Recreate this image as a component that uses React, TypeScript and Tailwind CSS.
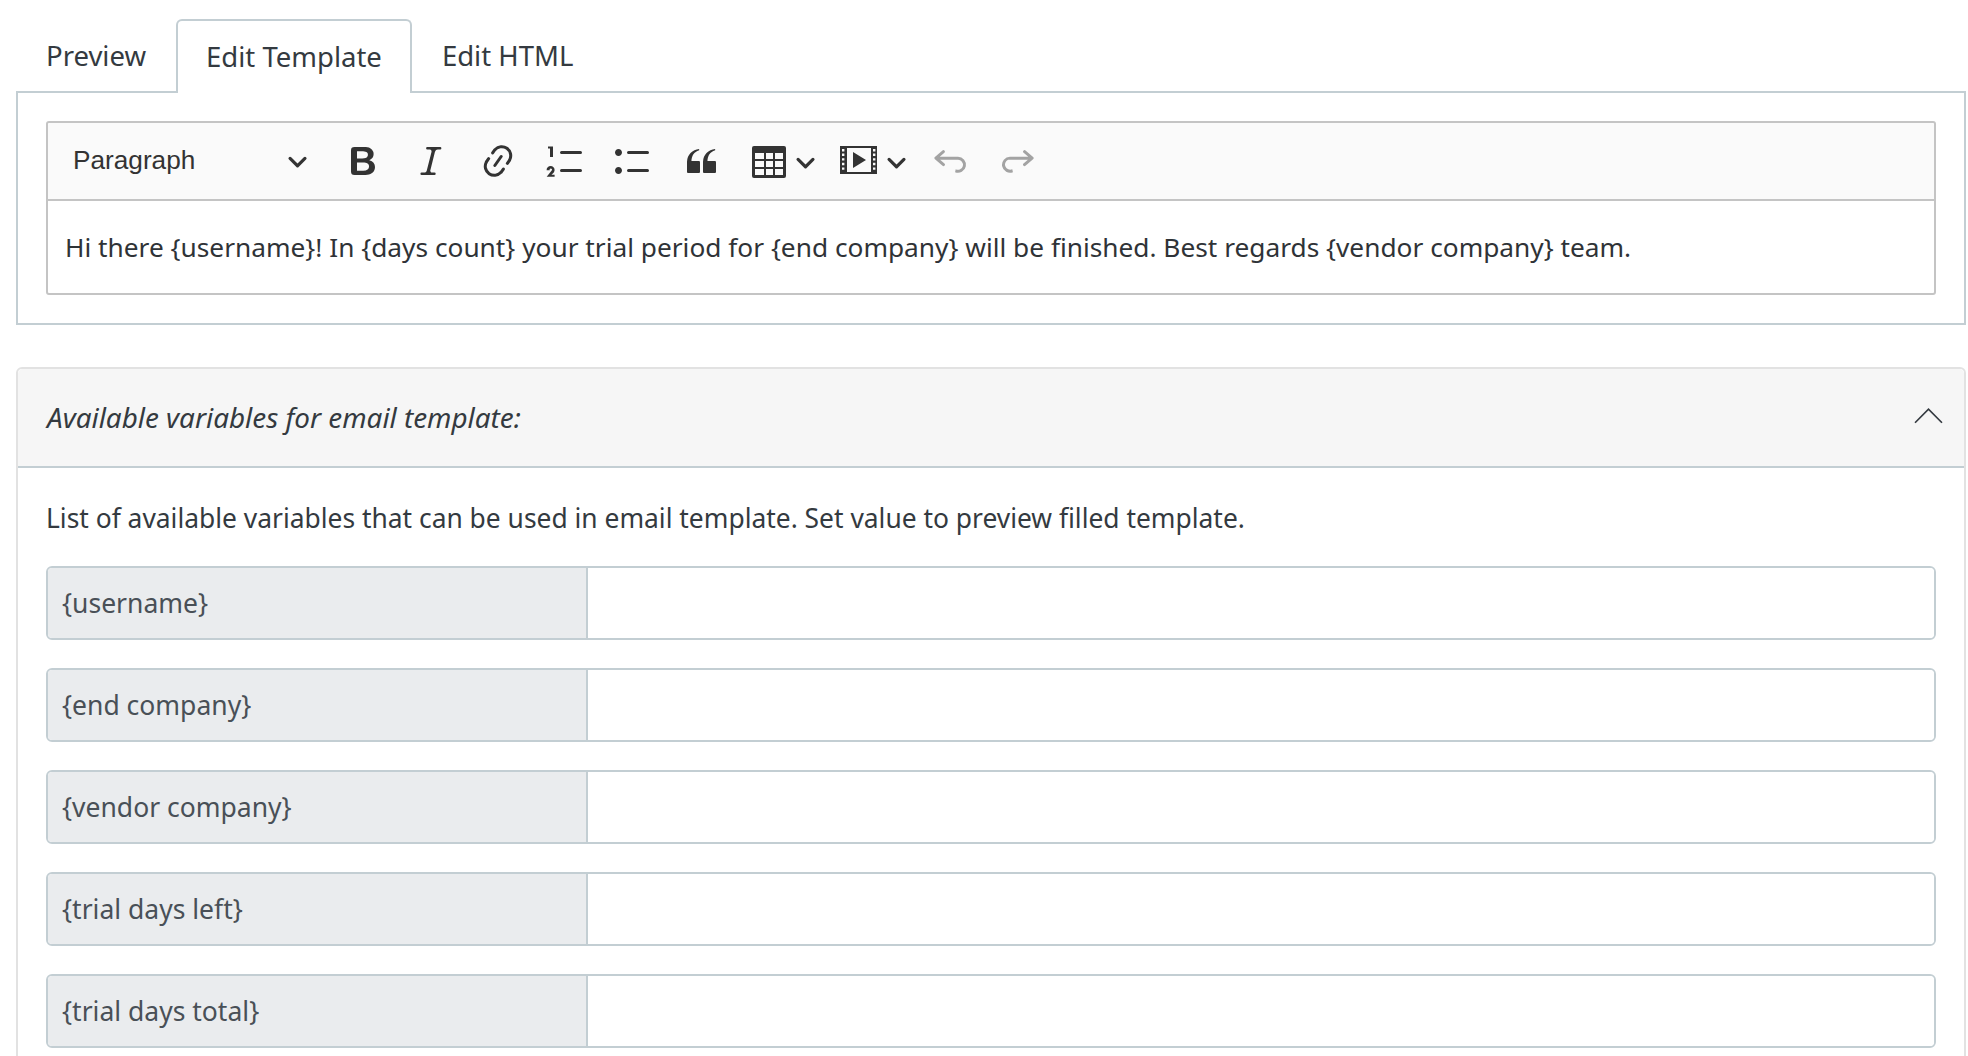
const FONT = "font-['Noto_Sans',sans-serif]";

function Icon({ d, className, evenOdd }: { d: string; className?: string; evenOdd?: boolean }) {
  return (
    <svg viewBox="0 0 20 20" className={`w-[40px] h-[40px] shrink-0 fill-current ${className ?? ""}`}>
      <path d={d} fillRule={evenOdd ? "evenodd" : undefined} />
    </svg>
  );
}

function Arrow({ className }: { className?: string }) {
  return (
    <svg viewBox="0 0 10 10" className={`w-[21px] h-[21px] shrink-0 fill-current ${className ?? ""}`}>
      <path d="M.941 4.523a.75.75 0 1 1 1.06-1.06l3.006 3.005 3.005-3.005a.75.75 0 1 1 1.06 1.06L5.537 8.059a.75.75 0 0 1-1.06 0L.941 4.523z" />
    </svg>
  );
}

const icons = {
  bold: "M10.187 17H5.773c-.637 0-1.092-.138-1.364-.415-.273-.277-.409-.718-.409-1.323V4.738c0-.617.14-1.062.419-1.332.279-.27.73-.406 1.354-.406h4.68c.69 0 1.288.041 1.793.124.506.083.96.242 1.36.478.341.197.644.447.906.75a3.262 3.262 0 0 1 .808 2.162c0 1.401-.722 2.426-2.167 3.075C15.05 10.175 16 11.315 16 13.01a3.756 3.756 0 0 1-2.296 3.504 6.1 6.1 0 0 1-1.517.377c-.571.073-1.238.11-2 .11zm-.217-6.217H7v4.087h3.069c1.977 0 2.965-.69 2.965-2.072 0-.707-.256-1.22-.768-1.537-.512-.319-1.277-.478-2.296-.478zM7 5.13v3.619h2.606c.729 0 1.292-.067 1.69-.2a1.6 1.6 0 0 0 .91-.765c.165-.267.247-.566.247-.897 0-.707-.26-1.176-.778-1.409-.519-.232-1.31-.348-2.375-.348H7z",
  italic: "m9.586 14.633.021.004c-.036.335.095.655.393.962.082.083.173.15.274.201h1.474a.6.6 0 1 1 0 1.2H5.304a.6.6 0 0 1 0-1.2h1.15c.474-.07.809-.182 1.005-.334.157-.122.291-.32.404-.597l2.416-9.55a1.053 1.053 0 0 0-.281-.823 1.12 1.12 0 0 0-.442-.296H8.15a.6.6 0 0 1 0-1.2h6.443a.6.6 0 1 1 0 1.2h-1.195c-.376.056-.65.155-.823.296-.215.175-.423.491-.623.95l-2.366 9.587z",
  link: "m11.077 15 .991-1.416a.75.75 0 1 1 1.229.86l-1.148 1.64a.748.748 0 0 1-.217.206 5.251 5.251 0 0 1-8.503-5.955.741.741 0 0 1 .12-.274l1.147-1.639a.75.75 0 1 1 1.228.86L4.933 10.7l.006.003a3.75 3.75 0 0 0 6.132 4.294l.006.004zm5.494-5.335a.748.748 0 0 1-.12.274l-1.147 1.639a.75.75 0 1 1-1.228-.86l.86-1.23a3.75 3.75 0 0 0-6.144-4.301l-.86 1.229a.75.75 0 0 1-1.229-.86l1.148-1.64a.748.748 0 0 1 .217-.206 5.251 5.251 0 0 1 8.503 5.955zm-4.563-2.532a.75.75 0 0 1 .184 1.045l-3.155 4.505a.75.75 0 1 1-1.229-.86l3.155-4.506a.75.75 0 0 1 1.045-.184z",
  numbered: "M7 5.75c0 .414.336.75.75.75h9.5a.75.75 0 1 0 0-1.5h-9.5a.75.75 0 0 0-.75.75zM3.5 3v5H2V3.7H1v-1h2.5V3zM.343 17.857l2.59-3.257H2.92a.6.6 0 1 0-1.04 0H.302a2 2 0 1 1 3.995 0h-.001c-.048.405-.16.734-.333.988-.175.254-.59.692-1.244 1.312H4.3v1h-4l.043-.043zM7 14.75a.75.75 0 0 1 .75-.75h9.5a.75.75 0 1 1 0 1.5h-9.5a.75.75 0 0 1-.75-.75z",
  bulleted: "M7 5.75c0 .414.336.75.75.75h9.5a.75.75 0 1 0 0-1.5h-9.5a.75.75 0 0 0-.75.75zm-6 0C1 4.784 1.777 4 2.75 4c.966 0 1.75.777 1.75 1.75 0 .966-.777 1.75-1.75 1.75C1.784 7.5 1 6.723 1 5.75zm6 9c0 .414.336.75.75.75h9.5a.75.75 0 1 0 0-1.5h-9.5a.75.75 0 0 0-.75.75zm-6 0c0-.966.777-1.75 1.75-1.75.966 0 1.75.777 1.75 1.75 0 .966-.777 1.75-1.75 1.75-.966 0-1.75-.777-1.75-1.75z",
  quote: "M3 10.423a6.5 6.5 0 0 1 6.056-6.408l.038.67C6.448 5.423 5.354 7.663 5.22 10H9c.552 0 .5.432.5.986v4.511c0 .554-.448.503-1 .503h-5c-.552 0-.5-.449-.5-1.003v-4.574zm8 0a6.5 6.5 0 0 1 6.056-6.408l.038.67c-2.646.739-3.74 2.979-3.873 5.315H17c.552 0 .5.432.5.986v4.511c0 .554-.448.503-1 .503h-5c-.552 0-.5-.449-.5-1.003v-4.574z",
  table: "M2.5 2.5h15a1 1 0 0 1 1 1v14a1 1 0 0 1-1 1h-15a1 1 0 0 1-1-1v-14a1 1 0 0 1 1-1zM3 6v3h4.5V6H3zm5.5 0v3H12V6H8.5zM13 6v3h4V6h-4zM3 10v3h4.5v-3H3zm5.5 0v3H12v-3H8.5zM13 10v3h4v-3h-4zM3 14v3h4.5v-3H3zm5.5 0v3H12v-3H8.5zM13 14v3h4v-3h-4z",
  media: "M.5 2.5H19v14H.5v-14zM4 3.5v12h12v-12H4zM1.5 4v1.2h1.2V4H1.5zm0 2.3v1.2h1.2V6.3H1.5zm0 2.3v1.2h1.2V8.6H1.5zm0 2.3v1.2h1.2v-1.2H1.5zm0 2.3v1.2h1.2v-1.2H1.5zM17 4v1.2h1.2V4H17zm0 2.3v1.2h1.2V6.3H17zm0 2.3v1.2h1.2V8.6H17zm0 2.3v1.2h1.2v-1.2H17zm0 2.3v1.2h1.2v-1.2H17zM7 5.5l6.5 4-6.5 4v-8z",
  undo: "m5.042 9.367 2.189 1.837a.75.75 0 0 1-.965 1.149l-3.788-3.18a.747.747 0 0 1-.21-.284.75.75 0 0 1 .17-.945L6.23 4.762a.75.75 0 1 1 .964 1.15L4.863 7.866h8.917A.75.75 0 0 1 14 7.9a4 4 0 1 1-1.477 7.718l.344-1.489a2.5 2.5 0 1 0 1.094-4.73l.008-.032H5.042z",
  redo: "m14.958 9.367-2.189 1.837a.75.75 0 0 0 .965 1.149l3.788-3.18a.747.747 0 0 0 .21-.284.75.75 0 0 0-.17-.945L13.77 4.762a.75.75 0 1 0-.964 1.15l2.331 1.955H6.22A.75.75 0 0 0 6 7.9a4 4 0 1 0 1.477 7.718l-.344-1.489A2.5 2.5 0 1 1 5.039 9.4l-.008-.032h9.927z",
};

const variables = ["{username}", "{end company}", "{vendor company}", "{trial days left}", "{trial days total}"];

function Toolbar() {
  return (
    <div className="flex items-center h-[78px] bg-[#fafafa] border-b-2 border-[#c4c4c4] text-[#333] rounded-t-[3px]">
      <div className="flex items-center w-[267px] pl-[25px] pr-[7px] justify-between">
        <span className="font-['Liberation_Sans',sans-serif] text-[26.2px]">Paragraph</span>
        <Arrow />
      </div>
      <div className="flex items-center gap-[27.6px] ml-[28px]">
        <Icon d={icons.bold} />
        <Icon d={icons.italic} />
        <Icon d={icons.link} />
        <Icon d={icons.numbered} />
        <Icon d={icons.bulleted} />
        <Icon d={icons.quote} />
      </div>
      <div className="flex items-center gap-[6px] ml-[28px]">
        <Icon d={icons.table} evenOdd />
        <Arrow />
      </div>
      <div className="flex items-center gap-[7px] ml-[23px]">
        <Icon d={icons.media} evenOdd />
        <Arrow />
      </div>
      <div className="flex items-center gap-[28px] ml-[23px] text-[#a3a3a3]">
        <Icon d={icons.undo} />
        <Icon d={icons.redo} />
      </div>
    </div>
  );
}

export default function App() {
  return (
    <div className={`h-[1056px] overflow-hidden bg-white pt-[19px] pl-[16px] pr-[2px] text-[#343a40] text-[26.4px] ${FONT}`}>
      <div className="flex relative z-10 -mb-[2px] h-[74px] items-stretch text-[27.5px]">
        <button className="px-[30px]">Preview</button>
        <button className="px-[28px] bg-white border-2 border-b-0 border-[#c3ced3] rounded-t-[6px]">Edit Template</button>
        <button className="px-[30px]">Edit HTML</button>
      </div>
      <div className="border-2 border-[#c3ced3] px-[28px] pt-[28px] pb-[28px]">
        <div className="border-2 border-[#c4c4c4] rounded-[3px]">
          <Toolbar />
          <div className="h-[92px] pt-[2px] flex items-center px-[17px] text-[#2f3337] text-[26.27px]">
            Hi there {"{username}"}! In {"{days count}"} your trial period for {"{end company}"} will be finished. Best regards {"{vendor company}"} team.
          </div>
        </div>
      </div>
      <div className="mt-[42px] pb-[60px] border-2 border-[#e2e2e2] rounded-t-[6px]">
        <div className="flex items-center justify-between h-[99px] bg-[#f6f6f6] border-b-2 border-[#c3ced3] pl-[29px] pr-[21px] rounded-t-[5px]">
          <span className="italic text-[27.85px]">Available variables for email template:</span>
          <svg viewBox="0 0 28 16" className="w-[29px] h-[17px] mb-[5px] fill-none stroke-current stroke-[1.6]">
            <path d="M1 15 14 2l13 13" />
          </svg>
        </div>
        <div className="px-[28px] pt-[32px]">
          <p className="leading-[36px] mb-[30px]">List of available variables that can be used in email template. Set value to preview filled template.</p>
          <div className="flex flex-col gap-[28px]">
            {variables.map((v) => (
              <div key={v} className="flex h-[74px] border-2 border-[#c3ced3] rounded-[6px] overflow-hidden">
                <span className="flex items-center w-[540px] shrink-0 pt-[2px] pl-[14px] bg-[#eaecee] border-r-2 border-[#c3ced3] text-[#495057] text-[26.5px]">{v}</span>
                <input className="flex-1 min-w-0 bg-white outline-none" />
              </div>
            ))}
          </div>
        </div>
      </div>
    </div>
  );
}
